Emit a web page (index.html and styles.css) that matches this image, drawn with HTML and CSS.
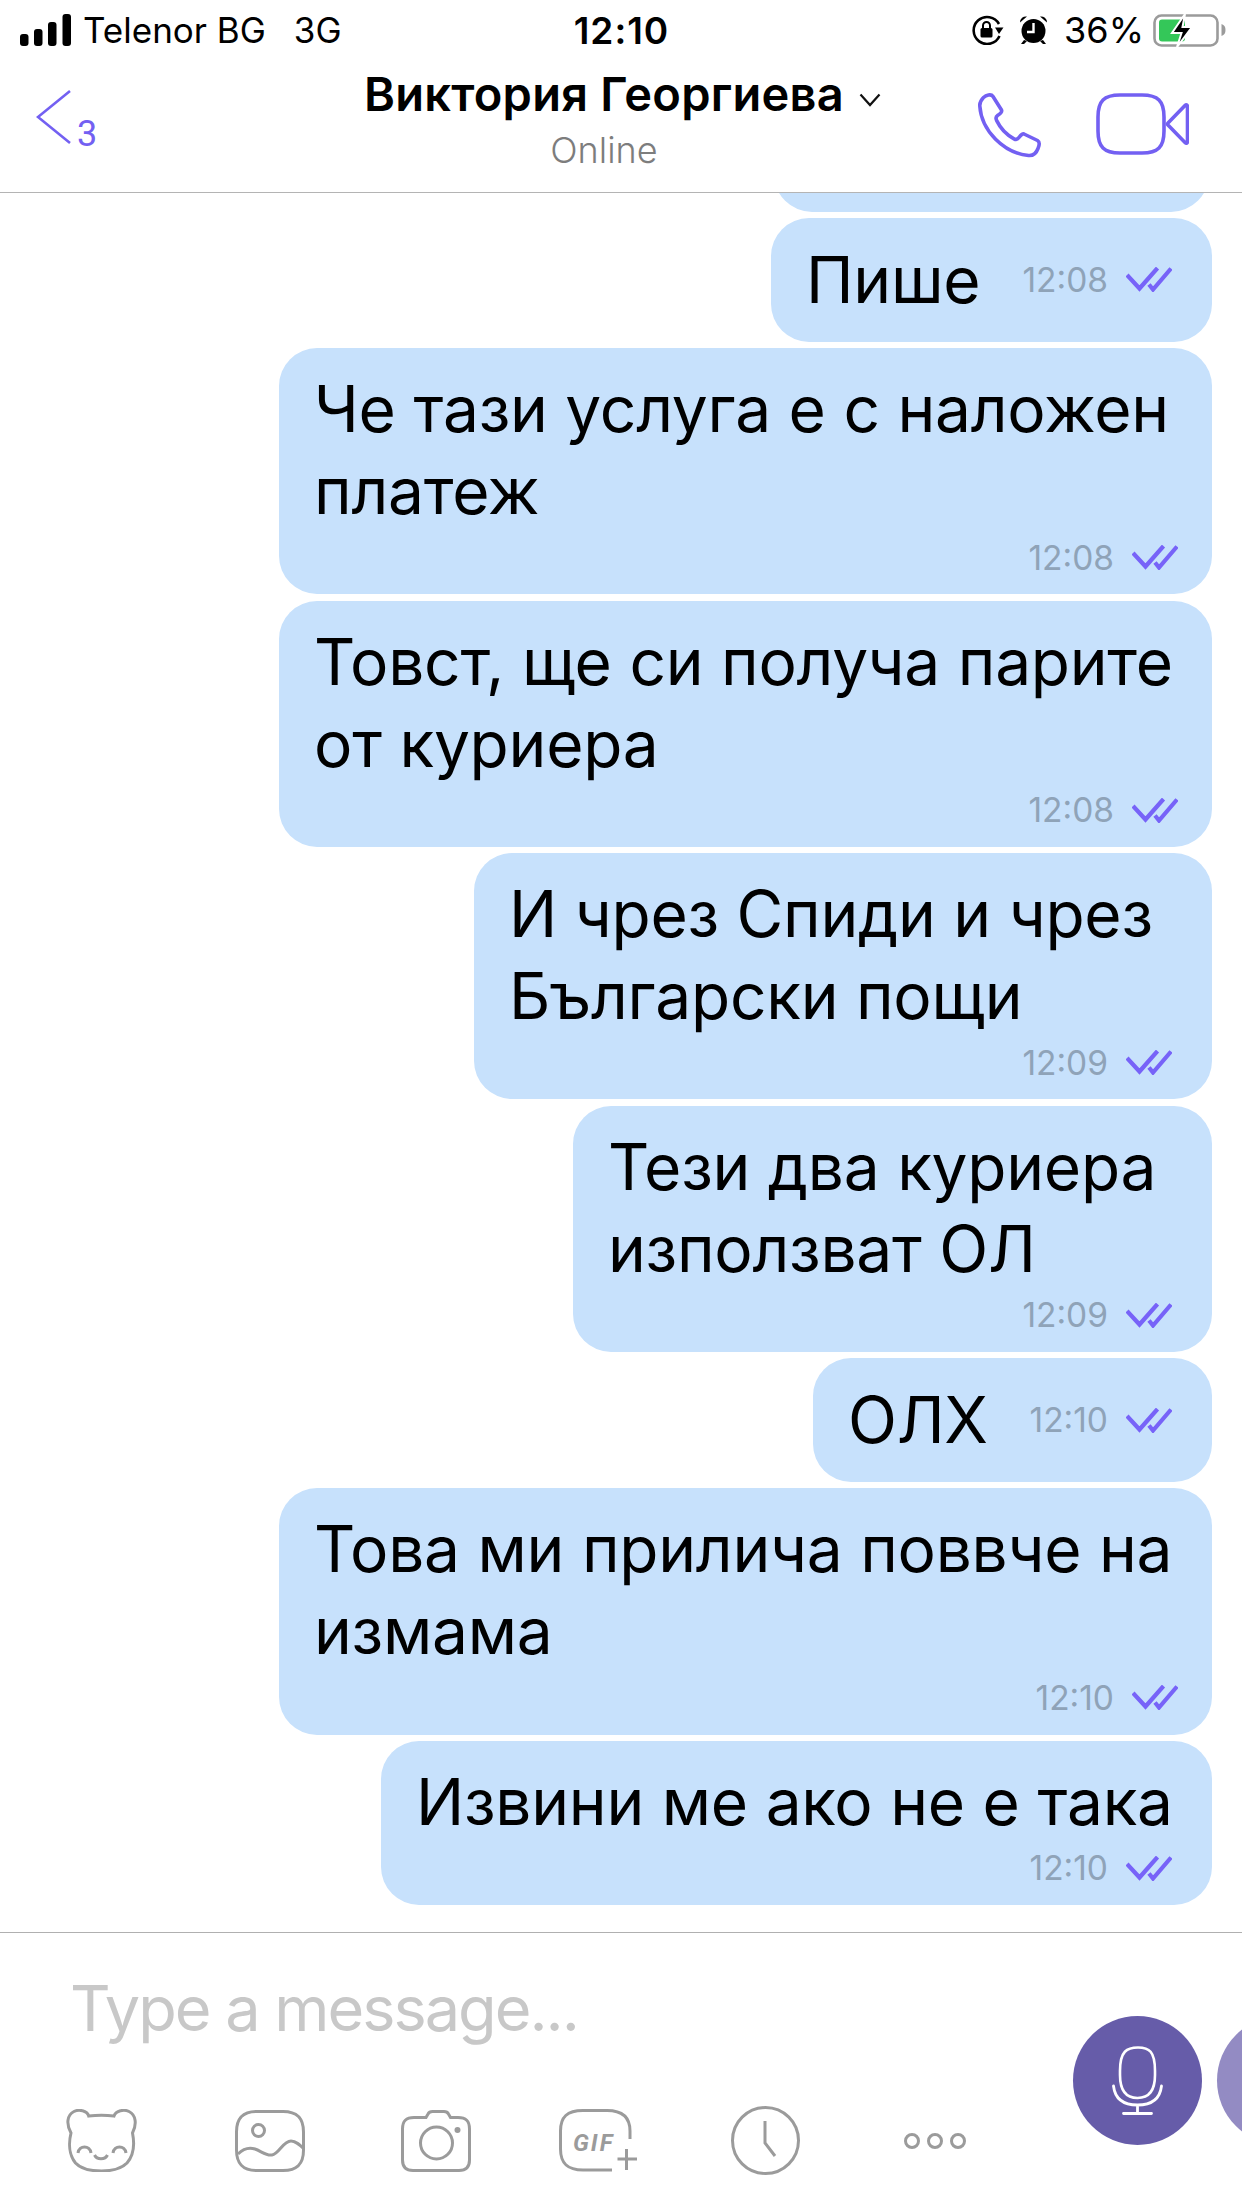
FILE: index.html
```html
<!DOCTYPE html>
<html lang="bg">
<head>
<meta charset="utf-8">
<title>Viber</title>
<link rel="stylesheet" href="styles.css">
</head>
<body>
<div class="screen">
  <div class="status">
    <div class="status-left">
      <svg class="signal" width="51" height="32" viewBox="0 0 51 32"><rect x="0" y="20" width="8.5" height="12" rx="3"/><rect x="14" y="15" width="8.5" height="17" rx="3"/><rect x="28" y="8" width="8.5" height="24" rx="3"/><rect x="42.5" y="0" width="8.5" height="32" rx="3"/></svg>
      <span class="carrier">Telenor BG</span><span class="net">3G</span>
    </div>
    <div class="clock">12:10</div>
    <div class="status-right">
      <svg class="rot" width="33" height="30" viewBox="0 0 33 30" fill="none"><path d="M28 9A13.5 13.5 0 1 0 28.5 21" stroke="#000" stroke-width="2.6"/><path d="M24 12.5h8.5L28 19z" fill="#000"/><rect x="9.5" y="13" width="12" height="9.5" rx="1.5" fill="#000"/><path d="M12 13.5V10.500a3.500 3.500 0 0 1 7 0V13.500" stroke="#000" stroke-width="2"/></svg>
      <svg class="alarm" width="29" height="30" viewBox="0 0 29 30"><circle cx="14.500" cy="16" r="12" fill="#000"/><path d="M1 7.500A6 6 0 0 1 8 1.500zM28 7.500A6 6 0 0 0 21 1.500zM5 25l-3 4h3l3-3zM24 25l3 4h-3l-3-3z" fill="#000"/><path d="M14.500 8v9H8" fill="none" stroke="#fff" stroke-width="2.400"/></svg>
      <span class="pct">36%</span>
      <svg class="batt" width="73" height="34" viewBox="0 0 73 34" fill="none"><rect x="1.500" y="2.500" width="63" height="30" rx="7" stroke="#9b9b9b" stroke-width="2.600"/><rect x="6" y="6.500" width="26" height="22" rx="3" fill="#34c759"/><path d="M68.500 11c3 1 4 3 4 6s-1 5-4 6z" fill="#9b9b9b"/><path d="M32 1 L19 20h9.500L24 34 39 14h-9.500z" fill="#000" stroke="#fff" stroke-width="2"/></svg>
    </div>
  </div>

  <header class="topbar">
    <div class="back">
      <svg width="36" height="56" viewBox="0 0 36 56" fill="none"><path d="M34 2 2 28l32 26" stroke="#7360f2" stroke-width="2.600"/></svg>
      <span class="back-count">3</span>
    </div>
    <div class="title">
      <div class="name">Виктория Георгиева<svg class="caret" width="22" height="14" viewBox="0 0 22 14" fill="none"><path d="M1.500 1.500 11 12l9.500-10.500" stroke="#111" stroke-width="2.200"/></svg></div>
      <div class="presence">Online</div>
    </div>
    <div class="actions">
      <svg width="64" height="65" viewBox="0 0 64 65" fill="none"><path d="M5.500 4.500C8 2.200 13 .4 15 3.500L23.500 17C24.500 19 22.500 20.500 19.800 22.300C17.800 23.600 17.600 25.400 18.700 27.600C22 34.500 29 42 36 45.800C38 46.900 39.500 46.400 40.800 44.700C42.500 42.500 44 40.300 46 41L59.500 47.500C62 49 61.500 52 60 55.500C58.500 59.500 55.500 63 50.500 62.500C26 60 3.500 38 1.800 13C1.600 9.500 3.500 6.500 5.500 4.500Z" stroke="#7360f2" stroke-width="3.600" stroke-linejoin="round"/></svg>
      <svg width="93" height="62" viewBox="0 0 93 62" fill="none"><path d="M24 2H46C62 2 68 8 68 24V38C68 54 62 60 46 60H24C8 60 2 54 2 38V24C2 8 8 2 24 2Z" stroke="#7360f2" stroke-width="3.600"/><path d="M72 30 89 12.500C90.500 11 91.500 12 91.500 14V48C91.500 50 90.500 51 89 49.500L72 32C71.500 31.500 71.500 30.500 72 30Z" stroke="#7360f2" stroke-width="3.600" stroke-linejoin="round"/></svg>
    </div>
  </header>

  <main class="messages">
    <div class="bubble bubble-clipped"></div>
    <div class="bubble row w-441">
      <span class="text">Пише</span>
      <span class="meta"><span class="time">12:08</span><svg class="ticks" width="46" height="25" viewBox="0 0 46 25" fill="none"><path d="M1 8 13.500 21.500 31.500 1M23 17.500 27 22.500 45 1.500"/></svg></span>
    </div>
    <div class="bubble w-933">
      <span class="text">Че тази услуга е с наложен<br>платеж</span>
      <span class="meta below"><span class="time">12:08</span><svg class="ticks" width="46" height="25" viewBox="0 0 46 25" fill="none"><path d="M1 8 13.500 21.500 31.500 1M23 17.500 27 22.500 45 1.500"/></svg></span>
    </div>
    <div class="bubble w-933">
      <span class="text">Товст, ще си получа парите<br>от куриера</span>
      <span class="meta below"><span class="time">12:08</span><svg class="ticks" width="46" height="25" viewBox="0 0 46 25" fill="none"><path d="M1 8 13.500 21.500 31.500 1M23 17.500 27 22.500 45 1.500"/></svg></span>
    </div>
    <div class="bubble w-738">
      <span class="text">И чрез Спиди и чрез<br>Български пощи</span>
      <span class="meta below near"><span class="time">12:09</span><svg class="ticks" width="46" height="25" viewBox="0 0 46 25" fill="none"><path d="M1 8 13.500 21.500 31.500 1M23 17.500 27 22.500 45 1.500"/></svg></span>
    </div>
    <div class="bubble w-639">
      <span class="text">Тези два куриера<br>използват ОЛ</span>
      <span class="meta below near"><span class="time">12:09</span><svg class="ticks" width="46" height="25" viewBox="0 0 46 25" fill="none"><path d="M1 8 13.500 21.500 31.500 1M23 17.500 27 22.500 45 1.500"/></svg></span>
    </div>
    <div class="bubble row w-399">
      <span class="text">ОЛХ</span>
      <span class="meta"><span class="time">12:10</span><svg class="ticks" width="46" height="25" viewBox="0 0 46 25" fill="none"><path d="M1 8 13.500 21.500 31.500 1M23 17.500 27 22.500 45 1.500"/></svg></span>
    </div>
    <div class="bubble w-933">
      <span class="text">Това ми прилича поввче на<br>измама</span>
      <span class="meta below"><span class="time">12:10</span><svg class="ticks" width="46" height="25" viewBox="0 0 46 25" fill="none"><path d="M1 8 13.500 21.500 31.500 1M23 17.500 27 22.500 45 1.500"/></svg></span>
    </div>
    <div class="bubble w-831">
      <span class="text">Извини ме ако не е така</span>
      <span class="meta below near"><span class="time">12:10</span><svg class="ticks" width="46" height="25" viewBox="0 0 46 25" fill="none"><path d="M1 8 13.500 21.500 31.500 1M23 17.500 27 22.500 45 1.500"/></svg></span>
    </div>
  </main>

  <footer class="composer">
    <div class="compose-main">
      <div class="placeholder">Type a message...</div>
      <div class="tools">
        <svg class="tool" width="71" height="63" viewBox="0 0 71 63" fill="none"><path d="M22.700 7Q35.500 5.500 48 7C50 1.500 58 0 63 2.500C70 6 71 15 66.500 24C68.500 34 68 46 61 54C55 60 46 62 35.500 62C25 62 15 60 9.500 54C3 46 2.500 34 5 24C0 15 1 6 8 2.500C13 0 21 1.500 22.700 7Z"/><path d="M12 44C13 36 24 36 25 44M47 44C48 36 59 36 60 44M28.500 46C31 51 39 51 41.500 46"/></svg>
        <svg class="tool t-photo" width="70" height="62" viewBox="0 0 70 62" fill="none"><path d="M22 1.500H48C62 1.500 68.500 8 68.500 22V40C68.500 54 62 60.500 48 60.500H22C8 60.500 1.500 54 1.500 40V22C1.500 8 8 1.500 22 1.500Z"/><circle cx="23.500" cy="20.500" r="6"/><path d="M3 44C8 39 14 37 20 39C26 41 31 46 37 45C44 44 48 31 56 31C61 31 65 35 69 39"/></svg>
        <svg class="tool t-camera" width="70" height="62" viewBox="0 0 70 62" fill="none"><path d="M25 7.500 27 4C28 2 29.500 1.500 31.500 1.500H43C45 1.500 46.500 2 47.500 4L49.500 7.500H57C65 7.500 68.500 11 68.500 19V50C68.500 57 65 60.500 58 60.500H12C5 60.500 1.500 57 1.500 50V19C1.500 11 5 7.500 13 7.500Z"/><circle cx="35.500" cy="33" r="16"/><circle class="fillg" cx="56.500" cy="20" r="3"/></svg>
        <svg class="tool t-gif" width="80" height="64" viewBox="0 0 80 64" fill="none"><path d="M53 61H24C8 61 1.500 54 1.500 40V22C1.500 8 8 1.500 24 1.500H48C63 1.500 71 8 71 22V30"/><path d="M58.500 50H78M67.500 40V61"/><text class="gif" x="14" y="42">GIF</text></svg>
        <svg class="tool t-clock" width="69" height="69" viewBox="0 0 69 69" fill="none"><circle cx="34.500" cy="34.500" r="33"/><path d="M34 15V37L44 50"/></svg>
        <svg class="tool t-more" width="64" height="16" viewBox="0 0 64 16" fill="none"><circle cx="8" cy="8" r="6.500"/><circle cx="31" cy="8" r="6.500"/><circle cx="54" cy="8" r="6.500"/></svg>
      </div>
    </div>
    <div class="fab fab-mic">
      <svg width="51" height="69" viewBox="0 0 51 69" fill="none"><path d="M26 1.500C15 1.500 8 5 8 25V29C8 45 14 52 25.500 52C37 52 43 45 43 29V25C43 5 37 1.500 26 1.500Z" stroke="#fff" stroke-width="2.600"/><path d="M1.500 40C3 53 11 59 25.500 59C40 59 48 53 49.500 40M25.500 59V67M11.500 67.500H39.500" stroke="#fff" stroke-width="2.800" stroke-linecap="round"/></svg>
    </div>
    <div class="fab fab-alt"></div>
  </footer>
</div>
</body>
</html>
```

FILE: styles.css
```css
* { box-sizing: border-box; }
html, body { margin: 0; padding: 0; background: #fff; }
body { font-family: Inter, "Noto Sans", sans-serif; color: #000; }

.screen {
  width: 1242px;
  height: 2208px;
  display: flex;
  flex-direction: column;
  overflow: hidden;
  background: #fff;
}

/* status bar */
.status {
  flex: none;
  height: 60px;
  display: grid;
  grid-template-columns: 1fr auto 1fr;
  align-items: center;
  font-size: 35px;
  padding: 0 16px 0 20px;
}
.status-left { display: flex; align-items: center; }
.signal { fill: #000; margin-right: 12px; }
.net { margin-left: 28px; }
.clock { font-weight: 600; font-size: 37px; letter-spacing: 1px; margin-right: 3px; }
.status-right { display: flex; align-items: center; justify-content: flex-end; }
.alarm { margin-left: 15px; }
.pct { margin-left: 16px; font-size: 36px; }
.batt { margin-left: 9px; }

/* header */
.topbar {
  flex: none;
  height: 133px;
  display: grid;
  grid-template-columns: 364px auto 1fr;
  border-bottom: 1px solid #b4b4b4;
}
.back { display: flex; align-items: flex-start; padding: 29px 0 0 36px; color: #7360f2; }
.back-count { font-family: Roboto, sans-serif; font-weight: 400; font-size: 36px; line-height: 36px; margin: 27px 0 0 5px; }
.title { text-align: center; padding-top: 6px; }
.name { position: relative; font-weight: 600; font-size: 47px; letter-spacing: .25px; line-height: 56px; white-space: nowrap; }
.caret { position: absolute; left: calc(100% + 15px); top: 27px; }
.presence { font-weight: 300; font-size: 36px; line-height: 44px; color: #7d7d7d; margin-top: 6px; }
.actions { display: flex; justify-content: flex-end; gap: 54px; padding: 33px 53px 0 0; align-items: flex-start; }

/* messages */
.messages {
  flex: 1;
  min-height: 0;
  display: flex;
  flex-direction: column;
  justify-content: flex-end;
  align-items: flex-end;
  gap: 6.25px;
  overflow: hidden;
  padding: 0 30px 27px 0;
}
.bubble {
  flex: none;
  background: #c7e1fc;
  border-radius: 38px;
  padding: 20px 40px 0 35px;
  display: flex;
  flex-direction: column;
  white-space: nowrap;
}
.bubble.row { flex-direction: row; align-items: center; justify-content: space-between; height: 124px; padding-top: 0; }
.bubble-clipped { width: 435px; height: 124px; margin-right: 3px; }
.w-933 { width: 933px; }
.w-831 { width: 831px; }
.w-738 { width: 738px; }
.w-639 { width: 639px; }
.w-441 { width: 441px; }
.w-399 { width: 399px; }
.text { font-size: 64px; line-height: 82px; letter-spacing: -.25px; }
.meta { display: flex; align-items: center; gap: 18px; }
.meta.below { margin: 0 -6px 0 0; justify-content: flex-end; height: 62.25px; padding-bottom: 11px; }
.meta.below.near { margin-right: 0; }
.time { font-size: 33.5px; color: #8fa3b8; font-weight: 400; }
.ticks path { stroke: #7763f8; stroke-width: 4.2px; }

/* composer */
.composer { flex: none; height: 276px; display: flex; overflow: hidden; border-top: 1px solid #b0b0b0; }
.compose-main { flex: none; width: 1073px; padding-left: 66px; }
.placeholder { font-size: 63px; line-height: 82px; letter-spacing: -2px; color: #c8c8c8; margin: 34px 0 0 4px; }
.tools { display: flex; align-items: center; height: 69px; margin-top: 57px; }
.tool { stroke: #9b9b9b; stroke-width: 3px; flex: none; }
.fillg { fill: #9b9b9b; stroke: none; }
.gif { font-family: Roboto, sans-serif; font-weight: 700; font-style: italic; font-size: 24px; letter-spacing: 2px; fill: #9b9b9b; stroke: none; }
.t-photo { margin-left: 98px; }
.t-camera { margin-left: 96px; }
.t-gif { margin-left: 88px; }
.t-clock { margin-left: 92px; }
.t-more { margin-left: 104px; }
.fab {
  flex: none;
  width: 129px;
  height: 129px;
  border-radius: 50%;
  margin-top: 83px;
  display: flex;
  align-items: center;
  justify-content: center;
}
.fab-mic { background: #665ca9; }
.fab-alt { background: #938bc3; margin-left: 15px; }
```
